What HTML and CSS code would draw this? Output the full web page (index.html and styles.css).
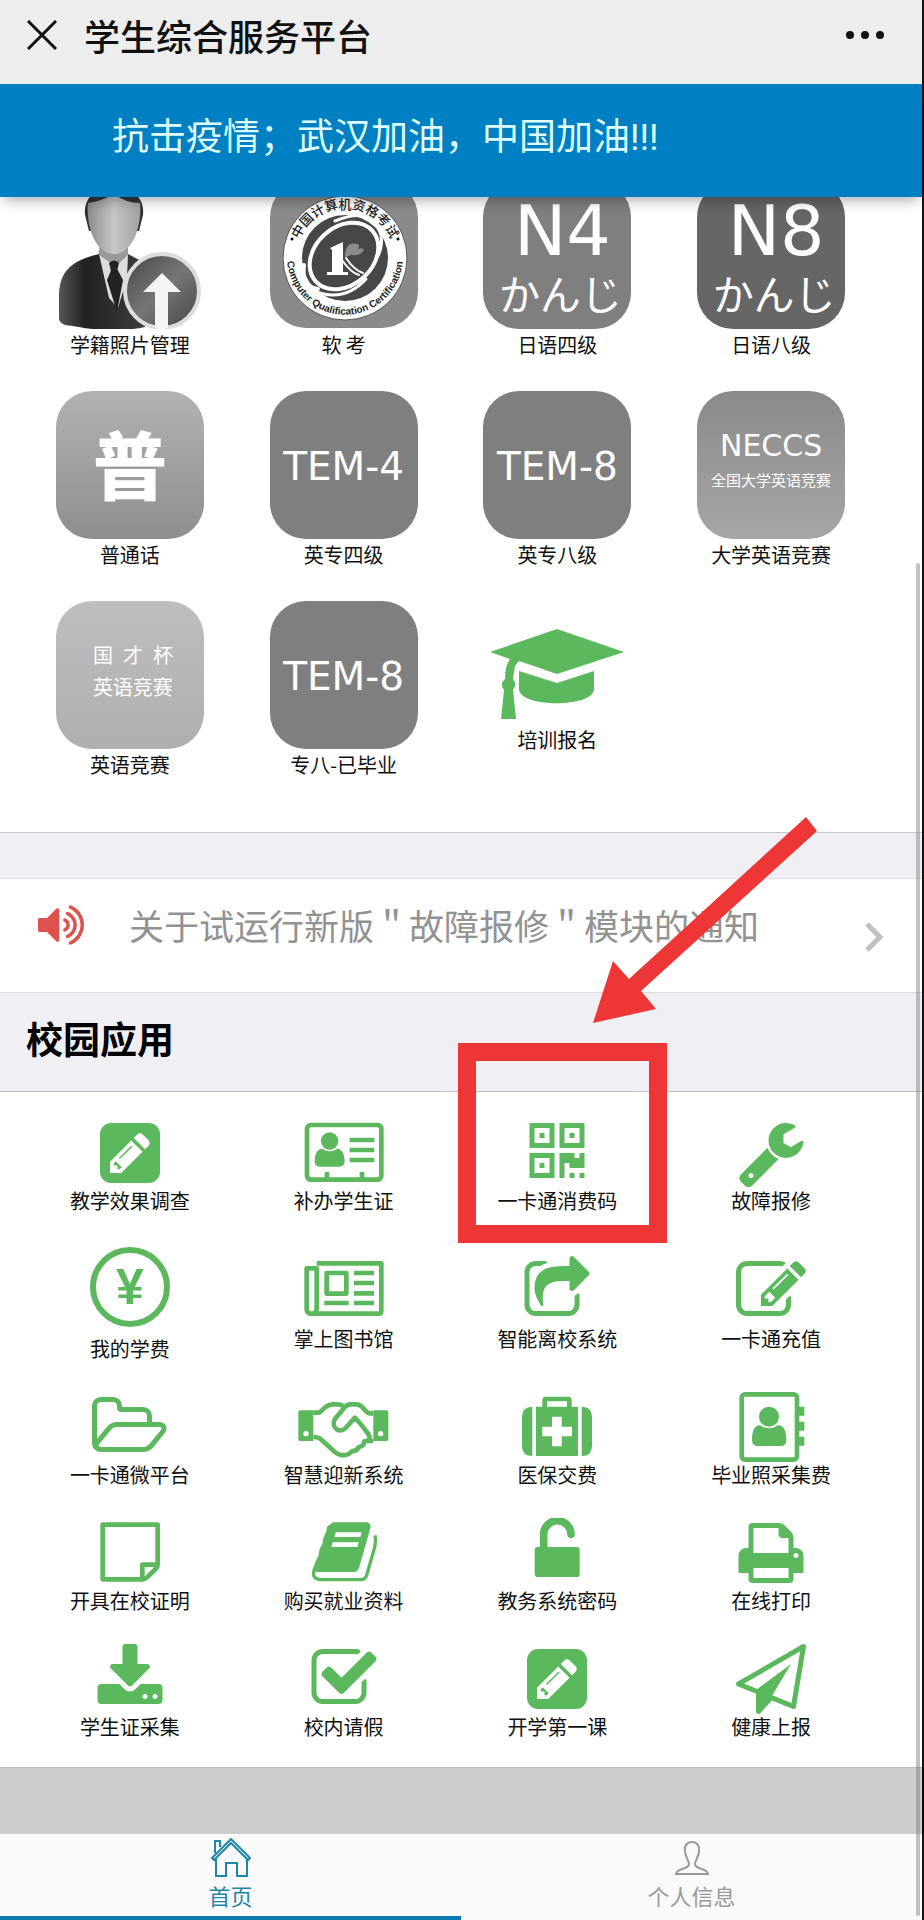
FILE: index.html
```html
<!DOCTYPE html>
<html lang="zh-CN">
<head>
<meta charset="utf-8">
<meta name="viewport" content="width=device-width, initial-scale=1">
<title>学生综合服务平台</title>
<link rel="stylesheet" href="styles.css">
</head>
<body>
<div class="page">
  <header class="topbar">
    <button class="icon-button" type="button" aria-label="关闭">
      <svg width="30" height="30" viewBox="0 0 30 30" fill="none" stroke="#111" stroke-width="3"><path d="M1 1l28 28M29 1L1 29"/></svg>
    </button>
    <h1 class="topbar-title">学生综合服务平台</h1>
    <button class="icon-button" type="button" aria-label="更多">
      <svg width="38" height="10" viewBox="0 0 38 10" fill="#111"><circle cx="4" cy="5" r="4"/><circle cx="19" cy="5" r="4"/><circle cx="34" cy="5" r="4"/></svg>
    </button>
  </header>
  <div class="banner">抗击疫情；武汉加油，中国加油!!!</div>

  <main>
    <section class="exams" aria-label="考试报名">
      <a class="exam" href="#photo">
        <svg class="tile-art" viewBox="0 0 148 148">
          <defs>
            <linearGradient id="face" x1="0" x2="1"><stop offset="0" stop-color="#8c8c8c"/><stop offset=".5" stop-color="#c6c6c6"/><stop offset="1" stop-color="#a2a2a2"/></linearGradient>
            <linearGradient id="suit" x1="0" x2="1"><stop offset="0" stop-color="#555"/><stop offset=".3" stop-color="#222"/><stop offset="1" stop-color="#3c3c3c"/></linearGradient>
            <linearGradient id="disc" x1="0" y1="0" x2="1" y2="1"><stop offset="0" stop-color="#444"/><stop offset=".5" stop-color="#777"/><stop offset="1" stop-color="#444"/></linearGradient>
          </defs>
          <g transform="translate(3 0)">
            <path d="M26 34C22-4 88-4 84 34l-4 16H30z" fill="#333"/>
            <path d="M41 60h28v16L57 92 39 78z" fill="#999"/>
            <path d="M29 22q14-2 26-9 12 9 26 9c2 18-5 51-26 51S27 40 29 22z" fill="url(#face)"/>
            <path d="M40 74l13 9h6l10-9 6 30-15 44H50L38 98z" fill="#ddd"/>
            <path d="M40 73C12 80 0 90 0 116v22c2 8 12 6 20 8 20 4 50 4 66 0V82l-17-9-1 24-9 30-9-10z" fill="url(#suit)"/>
            <path d="M48 99l7-17 9 17-6 32z" fill="#222"/><path d="M50 82q5-5 10 0l-2 8h-6z" fill="#222"/>
            <circle cx="103" cy="110" r="37" fill="url(#disc)" stroke="#ddd" stroke-width="4"/>
            <path d="M103 92l19 19h-13v36q-6 2-13 0v-36H84z" fill="#f4f4f4"/>
          </g>
        </svg>
        <span class="label">学籍照片管理</span>
      </a>
      <a class="exam" href="#ruankao">
        <svg class="tile-art" viewBox="0 0 148 148">
          <defs>
            <path id="arc-top" d="M25.500 77a49.500 49.500 0 0 1 99 0"/>
            <path id="arc-bottom" d="M18 65a58 58 0 1 0 114 0"/>
          </defs>
          <rect width="148" height="147" rx="36" fill="#8a8a8a"/>
          <circle cx="75" cy="77" r="62" fill="#fff" stroke="#555" stroke-width="1"/>
          <circle cx="75" cy="77" r="43" fill="#474747"/>
          <g fill="none" stroke="#fff" stroke-linecap="round">
            <ellipse cx="74" cy="75" rx="38" ry="29" transform="rotate(-42 74 75)" stroke-width="4"/>
            <path d="M44 110q30 12 52-12" stroke-width="3"/>
            <path d="M34 84q-3 22 14 24" stroke-width="4"/>
            <path d="M65 40q38-16 46 14 2 14-5 24" stroke-width="3"/>
            <path d="M76 77q8 12 17 15M72 79q9 13 17 15" stroke-width="2"/>
          </g>
          <path d="M60 67l13-6v30h5v3H57v-3h5V69z" fill="#fff"/>
          <path d="M75 76c0-12 6-16 14-12 0 6-6 10-14 12zM82 74c4-6 8-8 12-6-1 4-6 7-12 6z" fill="#8c8c8c"/>
          <text class="seal-cn"><textPath href="#arc-top" startOffset="50%" text-anchor="middle">中国计算机资格考试</textPath></text>
          <text class="seal-en"><textPath href="#arc-bottom" startOffset="50%" text-anchor="middle">Computer Qualification Certification</textPath></text>
          <circle cx="22" cy="58" r="1.500"/><circle cx="128" cy="58" r="1.500"/>
        </svg>
        <span class="label">软 考</span>
      </a>
      <a class="exam" href="#n4"><span class="tile tile-jp"><b class="jp-level">N4</b><span class="kana">かんじ</span></span><span class="label">日语四级</span></a>
      <a class="exam" href="#n8"><span class="tile tile-jp tile-dark"><b class="jp-level">N8</b><span class="kana">かんじ</span></span><span class="label">日语八级</span></a>

      <a class="exam" href="#putonghua"><span class="tile tile-fade"><b class="pu">普</b></span><span class="label">普通话</span></a>
      <a class="exam" href="#tem4"><span class="tile"><span class="tem">TEM-4</span></span><span class="label">英专四级</span></a>
      <a class="exam" href="#tem8"><span class="tile"><span class="tem">TEM-8</span></span><span class="label">英专八级</span></a>
      <a class="exam" href="#neccs"><span class="tile tile-neccs"><span class="neccs">NECCS</span><span class="neccs-sub">全国大学英语竞赛</span></span><span class="label">大学英语竞赛</span></a>

      <a class="exam" href="#guocai"><span class="tile tile-light"><span class="cup"><span>国</span><span>才</span><span>杯</span></span><span class="cup">英语竞赛</span></span><span class="label">英语竞赛</span></a>
      <a class="exam" href="#tem8-graduate"><span class="tile"><span class="tem">TEM-8</span></span><span class="label">专八-已毕业</span></a>
      <a class="exam exam-training" href="#training">
        <svg class="cap" viewBox="0 0 134 90"><path d="M67 0l67 23-67 22-38-13-4 5-2 13q3 3 2 7l-2 4 3 29H11l3-29q-5-6 1-11 0-13 5-20L0 23zM29 42l38 12 37-12v18c0 19-75 19-75 0z"/></svg>
        <span class="label">培训报名</span>
      </a>
    </section>

    <a class="notice" href="#notice">
      <svg class="notice-icon" viewBox="64 0 1664 1792"><path d="M832 352v1088q0 26-19 45t-45 19-45-19l-333-333h-262q-26 0-45-19t-19-45v-384q0-26 19-45t45-19h262l333-333q19-19 45-19t45 19 19 45zm384 544q0 76-42.500 141.500t-112.500 93.500q-10 5-25 5-26 0-45-18.500t-19-45.500q0-21 12-35.500t29-25 34-23 29-36 12-56.500-12-56.500-29-36-34-23-29-25-12-35.500q0-27 19-45.500t45-18.500q15 0 25 5 70 27 112.500 93t42.500 142zm256 0q0 153-85 282.500t-225 188.500q-13 5-25 5-27 0-46-19t-19-45q0-39 39-59 56-29 76-44 74-54 115.500-135.500t41.500-173.500-41.500-173.500-115.500-135.500q-20-15-76-44-39-20-39-59 0-26 19-45t45-19q13 0 26 5 140 59 225 188.500t85 282.500zm256 0q0 230-127 422.500t-338 283.500q-13 5-26 5-26 0-45-19t-19-45q0-36 39-59 7-4 22.500-10.500t22.500-10.500q46-25 82-51 123-91 192-227t69-289-69-289-192-227q-36-26-82-51-7-4-22.500-10.500t-22.500-10.500q-39-23-39-59 0-26 19-45t45-19q13 0 26 5 211 91 338 283.500t127 422.500z"/></svg>
      <span class="notice-text">关于试运行新版＂故障报修＂模块的通知</span>
      <svg class="chevron" viewBox="0 0 20 30"><path d="M3 2l13 13L3 28"/></svg>
    </a>

    <h2 class="section-title">校园应用</h2>

    <section class="apps" aria-label="校园应用">
      <a class="app" href="#survey"><svg class="icon" viewBox="0 0 1792 1792"><path id="pencil-square" d="M532 1108l152 152-52 52h-56v-96h-96v-56zm414-390q14 13-3 30l-291 291q-17 17-30 3-14-13 3-30l291-291q17-17 30-3zm-274 690l544-544-288-288-544 544v288h288zm608-608l92-92q28-28 28-68t-28-68l-152-152q-28-28-68-28t-68 28l-92 92zm384-384v960q0 119-84.500 203.500t-203.500 84.500h-960q-119 0-203.500-84.500t-84.500-203.500v-960q0-119 84.500-203.500t203.500-84.500h960q119 0 203.500 84.500t84.500 203.500z"/></svg><span class="label">教学效果调查</span></a>
      <a class="app" href="#id-card"><svg class="icon" viewBox="0 0 240 210"><rect class="line" x="9" y="21" width="223" height="164" rx="12"/><circle cx="77" cy="69" r="26"/><path d="M55 92q22 16 44 0c17 0 23 20 23 38q0 16-16 16H48q-16 0-16-16c0-18 6-38 23-38z"/><path d="M137 59h74v14h-74zM137 89h74v14h-74zM137 119h74v14h-74zM62 162h14v22H62zM167 162h14v22h-14z"/></svg><span class="label">补办学生证</span></a>
      <a class="app" href="#pay-code"><svg class="icon" viewBox="0 0 1792 1792"><path d="M576 1152v128h-128v-128h128zm0-768v128h-128v-128h128zm768 0v128h-128v-128h128zm-1024 1023h384v-383h-384v383zm0-767h384v-384h-384v384zm768 0h384v-384h-384v384zm-256 256v640h-640v-640h640zm512 512v128h-128v-128h128zm256 0v128h-128v-128h128zm0-512v384h-384v-128h-128v384h-128v-640h384v128h128v-128h128zm-768-768v640h-640v-640h640zm768 0v640h-640v-640h640z"/></svg><span class="label">一卡通消费码</span>
        <span class="highlight"></span>
        <svg class="arrow" viewBox="0 0 224 206"><path d="M0 206l20-62 16 18L213 0l11 14L48 174l15 18z"/></svg>
      </a>
      <a class="app" href="#repair"><svg class="icon" viewBox="0 0 1792 1792"><path d="M448 1472q0-26-19-45t-45-19-45 19-19 45 19 45 45 19 45-19 19-45zm644-420l-682 682q-37 37-90 37-52 0-91-37l-106-108q-38-36-38-90 0-53 38-91l681-681q39 98 114.500 173.500t173.500 114.500zm634-435q0 39-23 106-47 134-164.500 217.500t-258.500 83.500q-185 0-316.500-131.500t-131.500-316.500 131.500-316.500 316.500-131.500q58 0 121.500 16.500t107.500 46.500q16 11 16 28t-16 28l-293 169v224l193 107q5-3 79-48.500t135.500-81 70.500-35.500q15 0 23.500 10t8.500 25z"/></svg><span class="label">故障报修</span></a>

      <a class="app app-fee" href="#fee"><span class="yen">¥</span><span class="label">我的学费</span></a>
      <a class="app app-loose" href="#library"><svg class="icon" viewBox="0 15 240 210"><path class="line" d="M38 37h194v143q0 8-8 8H23q-15 0-15-15V52h30v121q0 15-15 15"/><path class="line" d="M68 66h59v62H68z"/><path d="M61 149h73v14H61zM150 59h60v14h-60zM150 89h60v14h-60zM150 120h60v14h-60zM150 149h60v14h-60z"/></svg><span class="label">掌上图书馆</span></a>
      <a class="app app-loose" href="#leave-school"><svg class="icon" viewBox="0 0 1792 1792"><path d="M1472 989v259q0 119-84.500 203.500t-203.500 84.500h-832q-119 0-203.500-84.500t-84.500-203.500v-832q0-119 84.500-203.500t203.500-84.500h255q13 0 22.500 9.500t9.500 22.500q0 27-26 32-77 26-133 60-10 4-16 4h-112q-66 0-113 47t-47 113v832q0 66 47 113t113 47h832q66 0 113-47t47-113v-214q0-19 18-29 28-13 54-37 16-16 35-8 21 9 21 29zm237-496l-384 384q-18 19-45 19-12 0-25-5-39-17-39-59v-192h-160q-323 0-438 131-119 137-74 473 3 23-20 34-8 2-12 2-16 0-26-13-10-14-21-31t-39.500-68.500-49.500-99.500-38.500-114-17.500-122q0-49 3.500-91t14-90 28-88 47-81.500 68.500-74 94.500-61.500 124.500-48.500 159.500-30.500 196.500-11h160v-192q0-42 39-59 13-5 25-5 26 0 45 19l384 384q19 19 19 45t-19 45z"/></svg><span class="label">智能离校系统</span></a>
      <a class="app app-loose" href="#top-up"><svg class="icon" viewBox="0 0 1792 1792"><path d="M888 1184l116-116-152-152-116 116v56h96v96h56zm440-720q-16-16-33 1l-350 350q-17 17-1 33t33-1l350-350q17-17 1-33zm80 594v190q0 119-84.500 203.500t-203.500 84.500h-832q-119 0-203.500-84.500t-84.500-203.500v-832q0-119 84.500-203.500t203.500-84.500h832q63 0 117 25 15 7 18 23 3 17-9 29l-49 49q-14 14-32 8-23-6-45-6h-832q-66 0-113 47t-47 113v832q0 66 47 113t113 47h832q66 0 113-47t47-113v-126q0-13 9-22l64-64q15-15 35-7t20 29zm-96-738l288 288-672 672h-288v-288zm444 132l-92 92-288-288 92-92q28-28 68-28t68 28l152 152q28 28 28 68t-28 68z"/></svg><span class="label">一卡通充值</span></a>

      <a class="app" href="#card-platform"><svg class="icon" viewBox="64 0 1920 1792"><path d="M1845 931q0-35-53-35h-1088q-40 0-85.500 21.500t-71.500 52.500l-294 363q-18 24-18 40 0 35 53 35h1088q40 0 86-22t71-53l294-363q18-22 18-39zm-1141-163h768v-160q0-40-28-68t-68-28h-576q-40 0-68-28t-28-68v-64q0-40-28-68t-68-28h-320q-40 0-68 28t-28 68v853l256-315q44-53 116-87.500t140-34.500zm1269 163q0 62-46 120l-295 363q-43 53-116 87.500t-140 34.500h-1088q-92 0-158-66t-66-158v-960q0-92 66-158t158-66h320q92 0 158 66t66 158v32h544q92 0 158 66t66 158v160h192q54 0 99 24.500t67 70.500q15 32 15 68z"/></svg><span class="label">一卡通微平台</span></a>
      <a class="app" href="#welcome"><svg class="icon" viewBox="0 0 272 210"><path fill-rule="evenodd" d="M6 55h40v92H6q-5 0-5-5V60q0-5 5-5zm18 62a8 8 0 1 0 0 16 8 8 0 1 0 0-16zM226 55h40q5 0 5 5v82q0 5-5 5h-40zm22 62a8 8 0 1 0 0 16 8 8 0 1 0 0-16z"/><path class="line" d="M46 62h13q7 0 11-5 16-20 36-20h12q10 0 17 4M226 64h-11q-6 0-11-6-15-21-28-21h-18q-10 0-17 8l-28 33c-18 24 10 51 30 30l27-31q15 14 41 49 8 12 1 20l-13 2q-1 15-17 17-4 13-19 12-16 17-38 11-9-2-20-13l-40-36q-6-4-19-4M212 147h14"/></svg><span class="label">智慧迎新系统</span></a>
      <a class="app" href="#insurance"><svg class="icon" viewBox="0 0 210 210"><path d="M31 44v148Q0 192 0 162V74Q0 44 31 44zM179 44v148q31 0 31-30V74q0-30-31-30z"/><path fill-rule="evenodd" d="M42 44h19V24q0-10 10-10h68q10 0 10 10v20h19v148H42zm33-16v16h60V28zm15 46v30H61v29h29v30h29v-30h31v-29h-31V74z"/></svg><span class="label">医保交费</span></a>
      <a class="app" href="#graduation-photo"><svg class="icon" viewBox="0 0 210 210"><rect class="line" x="17" y="7" width="166" height="196" rx="10"/><circle cx="99" cy="74" r="30"/><path d="M72 100q27 18 54 0c19 0 25 20 25 44q0 18-18 18H66q-18 0-18-18c0-24 6-44 24-44zM186 44h19v27h-19zM186 89h19v27h-19zM186 134h19v27h-19z"/></svg><span class="label">毕业照采集费</span></a>

      <a class="app" href="#certificate"><svg class="icon" viewBox="0 0 210 210"><path class="line" d="M23 20h165v120q0 7-6 13l-26 25q-6 6-14 6H23zM188 140h-46v44"/></svg><span class="label">开具在校证明</span></a>
      <a class="app" href="#books"><svg class="icon" viewBox="0 0 210 210"><path fill-rule="evenodd" d="M72 13h98q18 0 14 18l-34 119q-4 12-16 12H26q-14 0-12-14l5-16 10-20 2-16 10-22 2-14 9-20 2-14zM80 43l-4 14h78l4-14zM71 73l-4 14h78l4-14z"/><path class="line line-thin" d="M17 150q-12 34 20 35h118q14 0 18-13l24-84q5-18 1-36"/></svg><span class="label">购买就业资料</span></a>
      <a class="app" href="#password"><svg class="icon" viewBox="0 0 210 210"><rect x="38" y="87" width="135" height="90" rx="10"/><path d="M65 92V49a41 41 0 0 1 82 0" fill="none" stroke="#5cb85c" stroke-width="23" stroke-linecap="round"/></svg><span class="label">教务系统密码</span></a>
      <a class="app" href="#print"><svg class="icon" viewBox="0 0 1792 1792"><path d="M448 1536h896v-256h-896v256zm0-640h896v-384h-160q-40 0-68-28t-28-68v-160h-640v640zm1152 64q0-26-19-45t-45-19-45 19-19 45 19 45 45 19 45-19 19-45zm128 0v416q0 13-9.500 22.500t-22.500 9.500h-224v160q0 40-28 68t-68 28h-960q-40 0-68-28t-28-68v-160h-224q-13 0-22.500-9.500t-9.500-22.500v-416q0-79 56.500-135.500t135.500-56.500h64v-544q0-40 28-68t68-28h672q40 0 88 20t76 48l152 152q28 28 48 76t20 88v256h64q79 0 135.500 56.500t56.500 135.500z"/></svg><span class="label">在线打印</span></a>

      <a class="app" href="#collect"><svg class="icon" viewBox="0 0 1792 1792"><path d="M1344 1344q0-26-19-45t-45-19-45 19-19 45 19 45 45 19 45-19 19-45zm256 0q0-26-19-45t-45-19-45 19-19 45 19 45 45 19 45-19 19-45zm128-224v320q0 40-28 68t-68 28h-1472q-40 0-68-28t-28-68v-320q0-40 28-68t68-28h465l135 136q58 56 136 56t136-56l136-136h464q40 0 68 28t28 68zm-325-569q17 41-14 70l-448 448q-18 19-45 19t-45-19l-448-448q-31-29-14-70 17-39 59-39h256v-448q0-26 19-45t45-19h256q26 0 45 19t19 45v448h256q42 0 59 39z"/></svg><span class="label">学生证采集</span></a>
      <a class="app" href="#leave"><svg class="icon" viewBox="0 0 1792 1792"><path d="M1472 930v318q0 119-84.500 203.500t-203.500 84.500h-832q-119 0-203.500-84.500t-84.500-203.500v-832q0-119 84.500-203.500t203.500-84.500h832q63 0 117 25 15 7 18 23 3 17-9 29l-49 49q-10 10-23 10-3 0-9-2-23-6-45-6h-832q-66 0-113 47t-47 113v832q0 66 47 113t113 47h832q66 0 113-47t47-113v-254q0-13 9-22l64-64q10-10 23-10 6 0 12 3 20 8 20 29zm231-489l-814 814q-24 24-57 24t-57-24l-430-430q-24-24-24-57t24-57l110-110q24-24 57-24t57 24l263 263 647-647q24-24 57-24t57 24l110 110q24 24 24 57t-24 57z"/></svg><span class="label">校内请假</span></a>
      <a class="app" href="#first-class"><svg class="icon" viewBox="0 0 1792 1792"><use href="#pencil-square"/></svg><span class="label">开学第一课</span></a>
      <a class="app" href="#health"><svg class="icon" viewBox="0 0 1792 1792"><path d="M1764 11q33 24 27 64l-256 1536q-5 29-32 45-14 8-31 8-11 0-24-5l-527-215-298 327q-18 21-47 21-14 0-23-4-19-7-30-23.500t-11-36.500v-452l-472-193q-37-14-40-55-3-39 32-59l1664-960q35-21 68 2zm-342 1499l221-1323-1434 827 336 137 863-639-478 797z"/></svg><span class="label">健康上报</span></a>
    </section>
  </main>

  <nav class="tabs">
    <a class="tab tab-active" href="#home">
      <svg width="40" height="40" viewBox="0 0 40 40"><path d="M1 20L20 1l19 19-2 2L20 5 3 22zM4 15V3h5v6M5 20v18h10V25h11v13h10V20"/></svg>
      <span>首页</span>
    </a>
    <a class="tab" href="#me">
      <svg width="40" height="40" viewBox="0 0 40 40"><path d="M20 4c-5 0-8 4-7 9 0 6 4 9 4 13 0 6-11 3-13 10h32c-2-7-13-4-13-10 0-4 4-7 4-13 1-5-2-9-7-9z"/></svg>
      <span>个人信息</span>
    </a>
  </nav>
  <div class="scrollbar"></div>
</div>
</body>
</html>
```
FILE: styles.css
```css
* {
  box-sizing: border-box;
}

body {
  margin: 0;
  background: #fff;
  color: #111;
  font-family: "Noto Sans CJK SC", "Noto Sans", sans-serif;
}

a {
  color: inherit;
  text-decoration: none;
}

svg {
  display: block;
  flex: none;
}

.page {
  position: relative;
  display: flex;
  flex-direction: column;
  min-height: 100vh;
  border-right: 2px solid #111;
  background: #ccc;
}

.topbar {
  display: flex;
  align-items: center;
  gap: 27px;
  height: 84px;
  padding: 0 38px 15px 27px;
  background: #ededed;
}

.icon-button {
  padding: 0;
  border: 0;
  background: none;
}

.topbar-title {
  flex: 1;
  margin: 0;
  font-size: 36px;
  font-weight: 500;
  line-height: 48px;
}

.banner {
  position: relative;
  z-index: 2;
  height: 113px;
  padding: 27px 112px 0;
  background: #007fc2;
  box-shadow: 0 8px 12px -4px rgba(0, 0, 0, 0.3);
  color: #dcfdfb;
  font-family: Roboto, "Noto Sans CJK SC", sans-serif;
  font-size: 37px;
  line-height: 54px;
}

.exams,
.apps {
  display: grid;
  grid-template-columns: repeat(4, 1fr);
  row-gap: 30px;
  padding-right: 44px;
  padding-left: 23px;
  background: #fff;
}

.exams {
  margin-top: -16px;
  padding-bottom: 51px;
}

.exam,
.app {
  display: flex;
  flex-direction: column;
  align-items: center;
}

.label {
  font-size: 20px;
  line-height: 26px;
  white-space: nowrap;
}

.exam .label {
  line-height: 32px;
}

.tile-art {
  width: 148px;
  height: 148px;
}

.tile {
  display: flex;
  flex-direction: column;
  align-items: center;
  justify-content: center;
  width: 148px;
  height: 148px;
  padding-top: 3px;
  border-radius: 36px;
  background: #7f7f7f;
  color: #fff;
}

.tile-jp {
  padding: 0 0 0 6px;
}

.tile-dark {
  background: #666;
}

.tile-fade {
  padding: 0 0 6px;
  background: linear-gradient(#b2b2b2, #8e8e8e);
}

.tile-neccs {
  gap: 4px;
  padding: 0 0 6px;
  background: linear-gradient(#8a8a8a, #a6a6a6);
}

.tile-light {
  gap: 6px;
  padding: 0 0 8px 6px;
  background: linear-gradient(#bebebe, #afafaf);
}

.tem,
.neccs,
.jp-level {
  font-family: "DejaVu Sans", sans-serif;
  font-weight: 400;
}

.tem {
  font-size: 39px;
  line-height: 46px;
}

.neccs {
  font-size: 30px;
  line-height: 32px;
}

.neccs-sub {
  font-size: 15px;
  line-height: 28px;
}

.jp-level {
  padding-left: 4px;
  font-size: 70px;
  line-height: 74px;
}

.kana {
  font-family: "Noto Sans CJK JP", sans-serif;
  font-size: 41px;
  line-height: 48px;
}

.cup {
  display: flex;
  justify-content: space-between;
  width: 80px;
  font-size: 20px;
  line-height: 26px;
}

.pu {
  font-size: 74px;
  font-weight: 900;
  line-height: 80px;
}

.seal-cn {
  fill: #222;
  font-size: 13px;
  font-weight: 500;
}

.seal-en {
  fill: #222;
  font-family: "Liberation Sans", sans-serif;
  font-size: 10px;
  font-weight: 700;
}

.exam-training {
  padding-top: 28px;
}

.cap {
  width: 134px;
  height: 90px;
  margin-bottom: 5px;
  fill: #5cb85c;
}

.notice {
  display: flex;
  align-items: center;
  height: 161px;
  padding: 46px 38px 22px;
  border-top: 1px solid #c8c7cc;
  border-bottom: 1px solid #dcdce0;
  background: linear-gradient(#efeff4 45px, #dedee3 45px, #dedee3 46px, #fff 46px);
}

.notice-icon {
  width: 46px;
  height: 50px;
  fill: #dd524d;
}

.notice-text {
  flex: 1;
  margin-left: 45px;
  color: #929292;
  font-size: 35px;
  line-height: 48px;
  white-space: nowrap;
}

.chevron {
  width: 20px;
  height: 30px;
  margin-top: 24px;
  fill: none;
  stroke: #c0c0c0;
  stroke-width: 5;
}

.section-title {
  margin: 0;
  padding: 18px 26px 26px;
  border-bottom: 1px solid #bfbfc3;
  background: #efeff4;
  color: #000;
  font-size: 37px;
  font-weight: 700;
  line-height: 54px;
}

.apps {
  padding-top: 26px;
  padding-bottom: 27px;
  border-bottom: 1px solid #bbb;
}

.app {
  position: relative;
}

.icon {
  height: 70px;
  fill: #5cb85c;
}

.icon .line {
  fill: none;
  stroke: #5cb85c;
  stroke-width: 14;
  stroke-linejoin: round;
}

.icon .line-thin {
  stroke-width: 10;
}

.app-loose {
  padding-top: 12px;
}

.app-fee {
  padding-top: 3px;
}

.yen {
  width: 80px;
  height: 80px;
  margin-bottom: 9px;
  border: 6px solid #5cb85c;
  border-radius: 50%;
  color: #5cb85c;
  font-family: "Liberation Sans", sans-serif;
  font-size: 50px;
  font-weight: 700;
  line-height: 68px;
  text-align: center;
}

.highlight {
  position: absolute;
  top: -75px;
  left: 7px;
  z-index: 3;
  width: 209px;
  height: 200px;
  border: 18px solid #ee3636;
}

.arrow {
  position: absolute;
  top: -301px;
  left: 142px;
  z-index: 3;
  width: 224px;
  height: 206px;
  fill: #ee3636;
}

.tabs {
  display: grid;
  grid-template-columns: 1fr 1fr;
  margin-top: auto;
  background: #fafafa;
  color: #999;
  font-size: 22px;
  line-height: 30px;
}

.tab {
  display: flex;
  flex-direction: column;
  align-items: center;
  gap: 2px;
  padding: 4px 0 6px;
  border-bottom: 4px solid transparent;
}

.tab svg {
  fill: none;
  stroke: currentColor;
  stroke-width: 2;
}

.tab-active {
  border-color: #0b78b0;
  color: #1f86a8;
}

.scrollbar {
  position: absolute;
  top: 563px;
  right: 2px;
  bottom: 4px;
  z-index: 4;
  width: 4px;
  border-radius: 2px;
  background: rgba(120, 120, 125, 0.45);
}
```
